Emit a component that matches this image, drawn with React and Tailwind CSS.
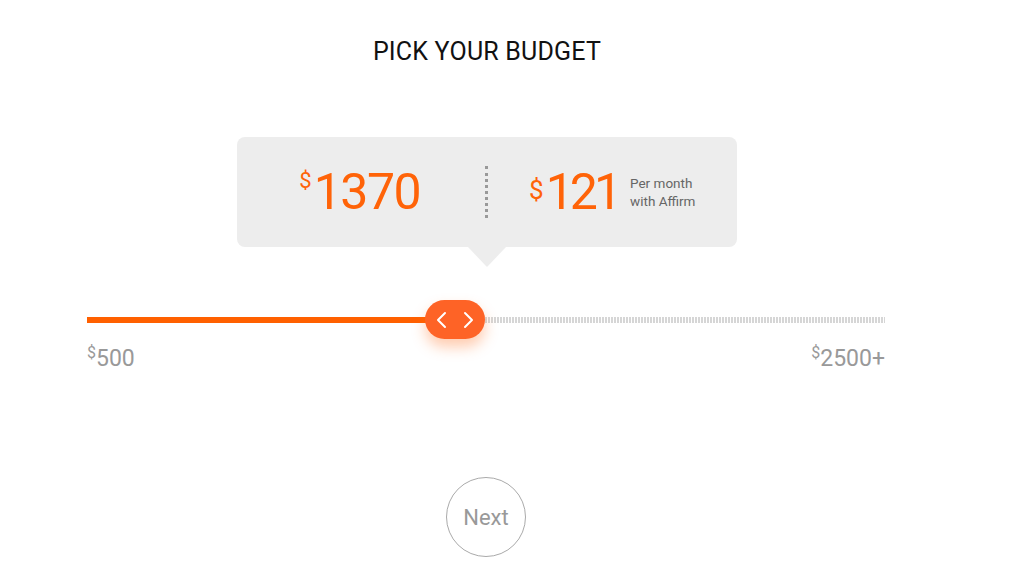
import React, { useState } from 'react'

function Chevrons() {
  return (
    <svg width="40" height="18" viewBox="0 0 40 18" fill="none" stroke="white" strokeWidth="2" strokeLinecap="round" strokeLinejoin="round">
      <path d="M10 2 L3 9 L10 16" />
      <path d="M30 2 L37 9 L30 16" />
    </svg>
  )
}

export default function App() {
  const [budget] = useState(1370);
  const min = 500;
  const max = 2500;
  const pct = (budget - min) / (max - min);

  return (
    <div className="min-h-screen bg-white font-['Roboto',sans-serif]">
      <div className="w-[798px] ml-[87px] pt-[38px] flex flex-col items-center">
        {/* Title */}
        <h1 className="text-[25px] leading-[28px] text-[#111] tracking-[0.2px] font-['Roboto',sans-serif] ml-[2px]">
          PICK YOUR BUDGET
        </h1>

        {/* Price bubble */}
        <div className="relative mt-[71px] w-[500px] h-[110px] rounded-[8px] bg-[#ededed] flex items-center ml-[2px]">
          <div className="flex-1 flex justify-center">
            <div className="flex items-start text-[#ff6308] mr-[4px]">
              <span className="text-[22px] leading-none mt-[-2px] mr-[2px]">$</span>
              <span className="text-[50px] leading-[40px] tracking-[-1.5px]">{budget}</span>
            </div>
          </div>
          <div className="h-[52px] border-l-[3px] border-dotted border-[#999] -ml-[2px]" />
          <div className="flex-1 flex justify-center">
            <div className="flex items-center">
              <span className="text-[26px] leading-none text-[#ff6308] mr-[2px] mt-[-4px]">$</span>
              <span className="text-[50px] leading-[40px] tracking-[-4px] text-[#ff6308]">121</span>
              <div className="ml-[12px] text-[13.5px] leading-[18px] text-[#666] mt-[0px]">
                <div>Per month</div>
                <div>with Affirm</div>
              </div>
            </div>
          </div>
          <div className="absolute left-1/2 -translate-x-1/2 top-full w-0 h-0 border-l-[19px] border-r-[19px] border-t-[20px] border-l-transparent border-r-transparent border-t-[#ededed]" />
        </div>

        {/* Slider */}
        <div className="relative w-full h-[40px] mt-[53px] flex items-center">
          <div className="h-[6px] bg-[#ff6000]" style={{ width: `${pct * 100}%` }} />
          <div className="flex-1 h-[6px] bg-[repeating-linear-gradient(90deg,#d6d6d6_0_2px,transparent_2px_3px)]" />
          <div
            className="absolute top-0 w-[60px] h-[39px] rounded-full bg-[#fe6326] flex items-center justify-center shadow-[0_8px_14px_rgba(255,110,30,0.35)]"
            style={{ left: `calc(${pct * 100}% - 9px)` }}
          >
            <Chevrons />
          </div>
        </div>

        {/* Range labels */}
        <div className="w-full flex justify-between mt-[6px] text-[23px] leading-[26px] text-[#999]">
          <div>
            <span className="text-[16px] align-top relative -top-[6px]">$</span>500
          </div>
          <div>
            <span className="text-[16px] align-top relative -top-[6px]">$</span>2500+
          </div>
        </div>

        {/* Next */}
        <button className="mt-[105px] w-[80px] h-[80px] rounded-full border border-[#aaa] text-[22px] text-[#999] flex items-center justify-center">
          Next
        </button>
      </div>
    </div>
  )
}
